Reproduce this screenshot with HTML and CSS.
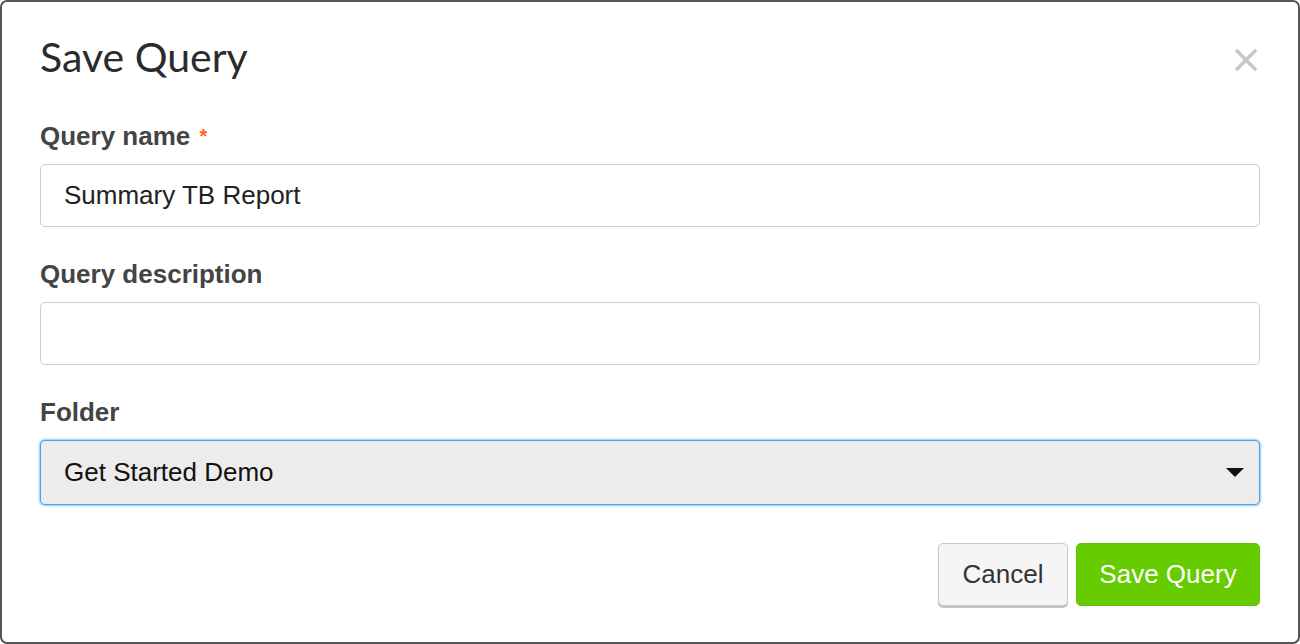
FILE: index.html
```html
<!DOCTYPE html>
<html lang="en">
<head>
<meta charset="utf-8">
<title>Save Query</title>
<link rel="stylesheet" href="styles.css">
</head>
<body>
<div class="modal">
  <div class="modal-header">
    <h1 class="modal-title">Save Query</h1>
    <button class="close" type="button" aria-label="Close">
      <svg width="22" height="22" viewBox="0 0 22 22"><path d="M2 2 L20 20 M20 2 L2 20" stroke="#c8c8c8" stroke-width="3.6" stroke-linecap="round"/></svg>
    </button>
  </div>
  <form class="modal-body">
    <div class="form-group">
      <label class="label">Query name <span class="req">*</span></label>
      <div class="input">Summary TB Report</div>
    </div>
    <div class="form-group">
      <label class="label">Query description</label>
      <div class="input"></div>
    </div>
    <div class="form-group">
      <label class="label">Folder</label>
      <div class="input select">
        <span>Get Started Demo</span>
        <svg class="caret" width="18" height="9" viewBox="0 0 18 9"><path d="M0 0 L18 0 L9 9 Z" fill="#111"/></svg>
      </div>
    </div>
  </form>
  <div class="modal-footer">
    <button class="btn btn-default" type="button">Cancel</button>
    <button class="btn btn-primary" type="button">Save Query</button>
  </div>
</div>
</body>
</html>
```
FILE: styles.css
```css
html, body {
  margin: 0;
  padding: 0;
  background: #fff;
}
body {
  font-family: "Liberation Sans", Arial, sans-serif;
  color: #333;
}
.modal {
  box-sizing: border-box;
  width: 1300px;
  height: 644px;
  border: 2px solid #555;
  border-radius: 7px;
  padding: 30px 38px 36px 38px;
  display: flex;
  flex-direction: column;
}
.modal-header {
  display: flex;
  justify-content: space-between;
  align-items: flex-start;
}
.modal-title {
  margin: 0;
  font-family: Lato, "Open Sans", sans-serif;
  font-weight: 400;
  font-size: 41px;
  line-height: 50px;
  color: #2b2b2b;
}
.close {
  border: 0;
  background: none;
  padding: 0;
  margin: 17px 3px 0 0;
  width: 22px;
  height: 22px;
  display: flex;
}
.modal-body {
  margin-top: 39px;
  display: flex;
  flex-direction: column;
  gap: 32px;
}
.form-group {
  display: flex;
  flex-direction: column;
}
.label {
  font-weight: 700;
  font-size: 26px;
  line-height: 30px;
  color: #444;
  margin-bottom: 13px;
}
.req {
  color: #f26522;
  font-size: 20px;
  vertical-align: top;
  margin-left: 2px;
}
.input {
  box-sizing: border-box;
  height: 63px;
  border: 1px solid #ccc;
  border-radius: 5px;
  padding: 0 23px;
  font-size: 26px;
  color: #222;
  display: flex;
  align-items: center;
  background: #fff;
}
.select {
  height: 65px;
  background: #ececec;
  border: 1px solid #4aa3ea;
  box-shadow: 0 0 2px 1px rgba(102, 175, 233, 0.7);
  color: #111;
  justify-content: space-between;
  padding-right: 15px;
}
.caret {
  display: block;
}
.modal-footer {
  margin-top: auto;
  display: flex;
  justify-content: flex-end;
  gap: 8px;
}
.btn {
  box-sizing: border-box;
  height: 63px;
  border-radius: 5px;
  font-family: "Liberation Sans", Arial, sans-serif;
  font-size: 26px;
  padding: 0;
}
.btn-default {
  width: 130px;
  background: #f5f5f5;
  color: #333;
  border: 1px solid #c8c8c8;
  box-shadow: 0 2px 0 #c4c4c4;
}
.btn-primary {
  width: 184px;
  background: #66cc00;
  color: #fff;
  border: 1px solid #5fbf00;
}
```
